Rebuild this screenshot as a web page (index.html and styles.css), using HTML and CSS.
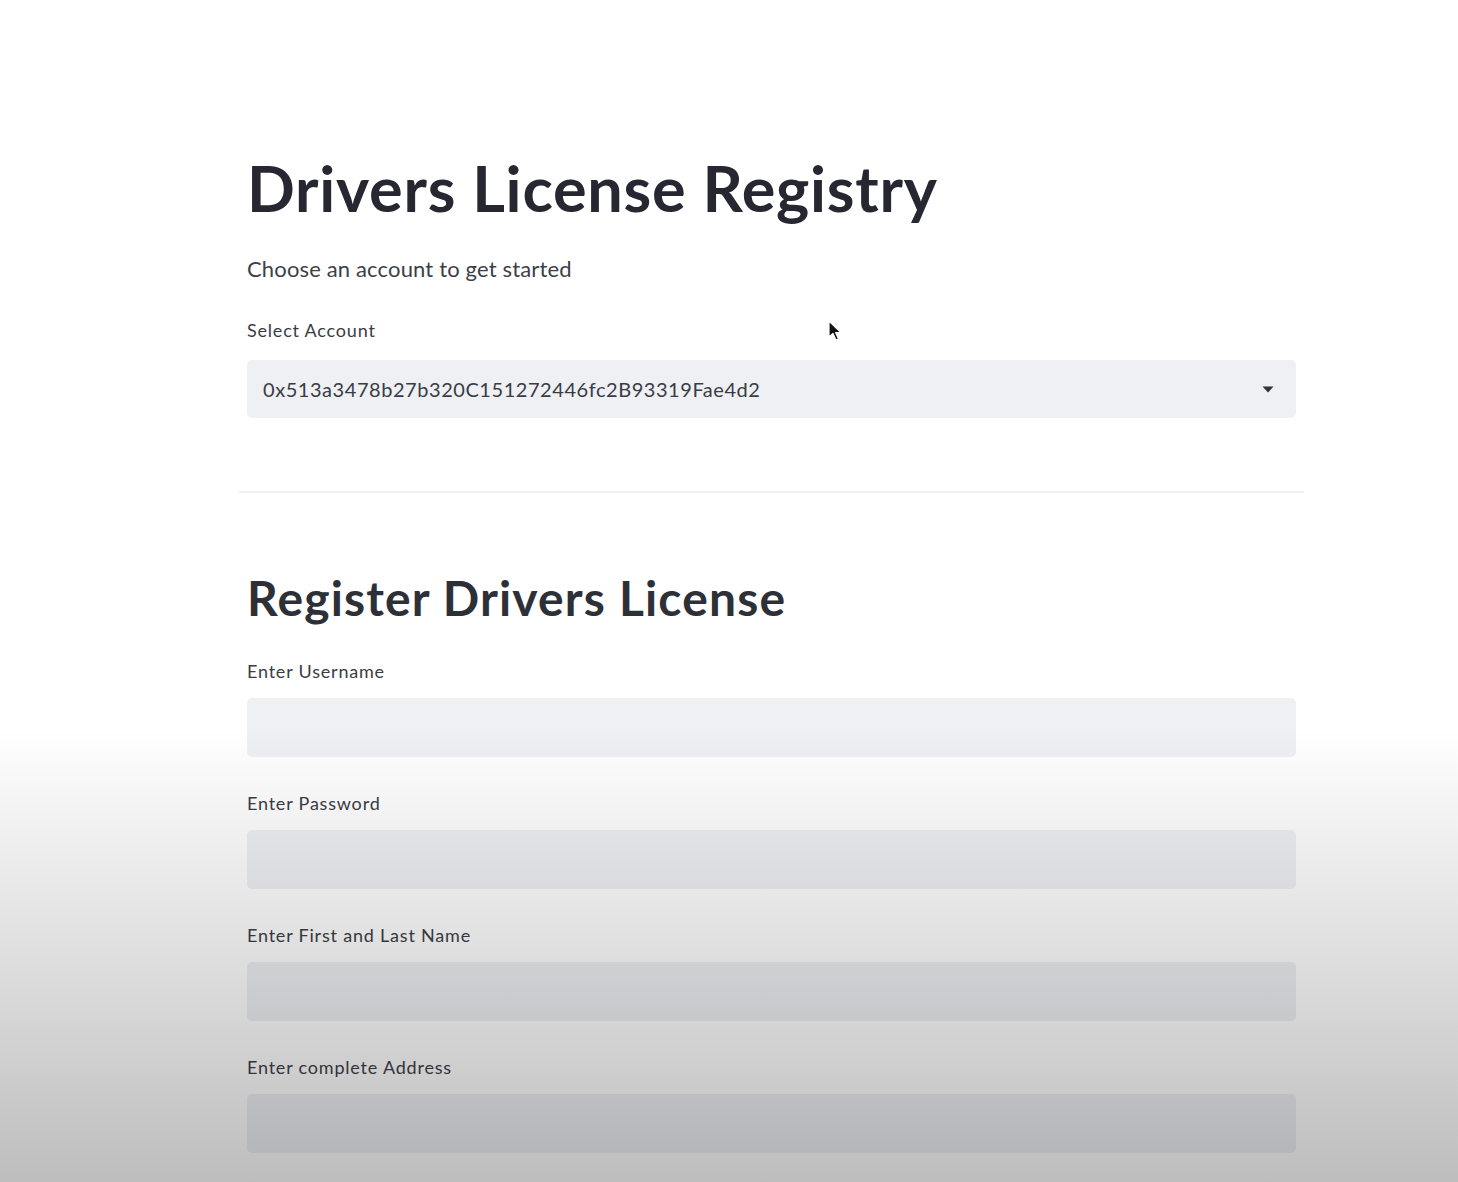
FILE: index.html
```html
<!DOCTYPE html>
<html lang="en">
<head>
<meta charset="utf-8">
<title>Drivers License Registry</title>
<link rel="stylesheet" href="styles.css">
</head>
<body>
<main class="page">
  <h1 class="title">Drivers License Registry</h1>
  <p class="lead">Choose an account to get started</p>
  <div class="field">
    <label class="label">Select Account</label>
    <div class="select">
      <span class="select-value">0x513a3478b27b320C151272446fc2B93319Fae4d2</span>
      <svg class="caret" width="12" height="7" viewBox="0 0 12 7"><path d="M0.5 0.5 L11.5 0.5 L6 6.5 Z" fill="#31333f"/></svg>
    </div>
  </div>
  <hr class="divider">
  <h2 class="subtitle">Register Drivers License</h2>
  <div class="form">
    <div class="field">
      <label class="label">Enter Username</label>
      <div class="input"></div>
    </div>
    <div class="field">
      <label class="label">Enter Password</label>
      <div class="input"></div>
    </div>
    <div class="field">
      <label class="label">Enter First and Last Name</label>
      <div class="input"></div>
    </div>
    <div class="field">
      <label class="label">Enter complete Address</label>
      <div class="input"></div>
    </div>
  </div>
</main>
<svg class="cursor" width="14" height="22" viewBox="0 0 14 22"><path d="M1 1 L1 17 L5 13.5 L8 20 L10.5 19 L7.6 12.6 L12.8 12.6 Z" fill="#111" stroke="#fff" stroke-width="1.2" stroke-linejoin="round"/></svg>
<div class="fade"></div>
</body>
</html>
```
FILE: styles.css
```css
html, body {
  margin: 0;
  padding: 0;
  background: #ffffff;
}
body {
  font-family: Lato, "Noto Sans", "Liberation Sans", sans-serif;
  color: #31333f;
  height: 1182px;
  overflow: hidden;
  position: relative;
}
.page {
  width: 1049px;
  padding-left: 247px;
  padding-top: 151px;
}
.title {
  margin: 0;
  font-size: 63px;
  line-height: 74px;
  font-weight: 700;
  color: #262730;
  letter-spacing: 0.75px;
}
.lead {
  margin: 29px 0 0;
  font-size: 22px;
  line-height: 30px;
  color: #3d3f48;
  letter-spacing: 0.15px;
}
.field {
  display: flex;
  flex-direction: column;
}
.lead + .field {
  margin-top: 34px;
}
.label {
  font-size: 18px;
  line-height: 24px;
  color: #3a3c45;
  letter-spacing: 0.8px;
}
.select {
  margin-top: 18px;
  height: 58px;
  background: #eef0f4;
  border-radius: 5px;
  display: flex;
  align-items: center;
  justify-content: space-between;
  padding: 0 22px 0 16px;
  box-sizing: border-box;
}
.select-value {
  font-size: 20px;
  color: #3a3c45;
  letter-spacing: 0.55px;
}
.divider {
  border: 0;
  height: 2px;
  background: #f0f1f3;
  margin: 73px -8px 0;
}
.subtitle {
  margin: 77px 0 0;
  font-size: 48px;
  line-height: 56px;
  font-weight: 700;
  color: #2e3038;
  letter-spacing: 1.15px;
}
.form {
  margin-top: 33px;
  display: flex;
  flex-direction: column;
  gap: 34px;
}
.input {
  margin-top: 15px;
  height: 59px;
  background: #eef0f4;
  border-radius: 5px;
}
.cursor {
  position: absolute;
  left: 828px;
  top: 320px;
}
.fade {
  position: absolute;
  left: 0;
  right: 0;
  top: 730px;
  bottom: 0;
  pointer-events: none;
  background: linear-gradient(to bottom, rgba(20,20,20,0) 0%, rgba(20,20,20,0.28) 100%);
}
```
